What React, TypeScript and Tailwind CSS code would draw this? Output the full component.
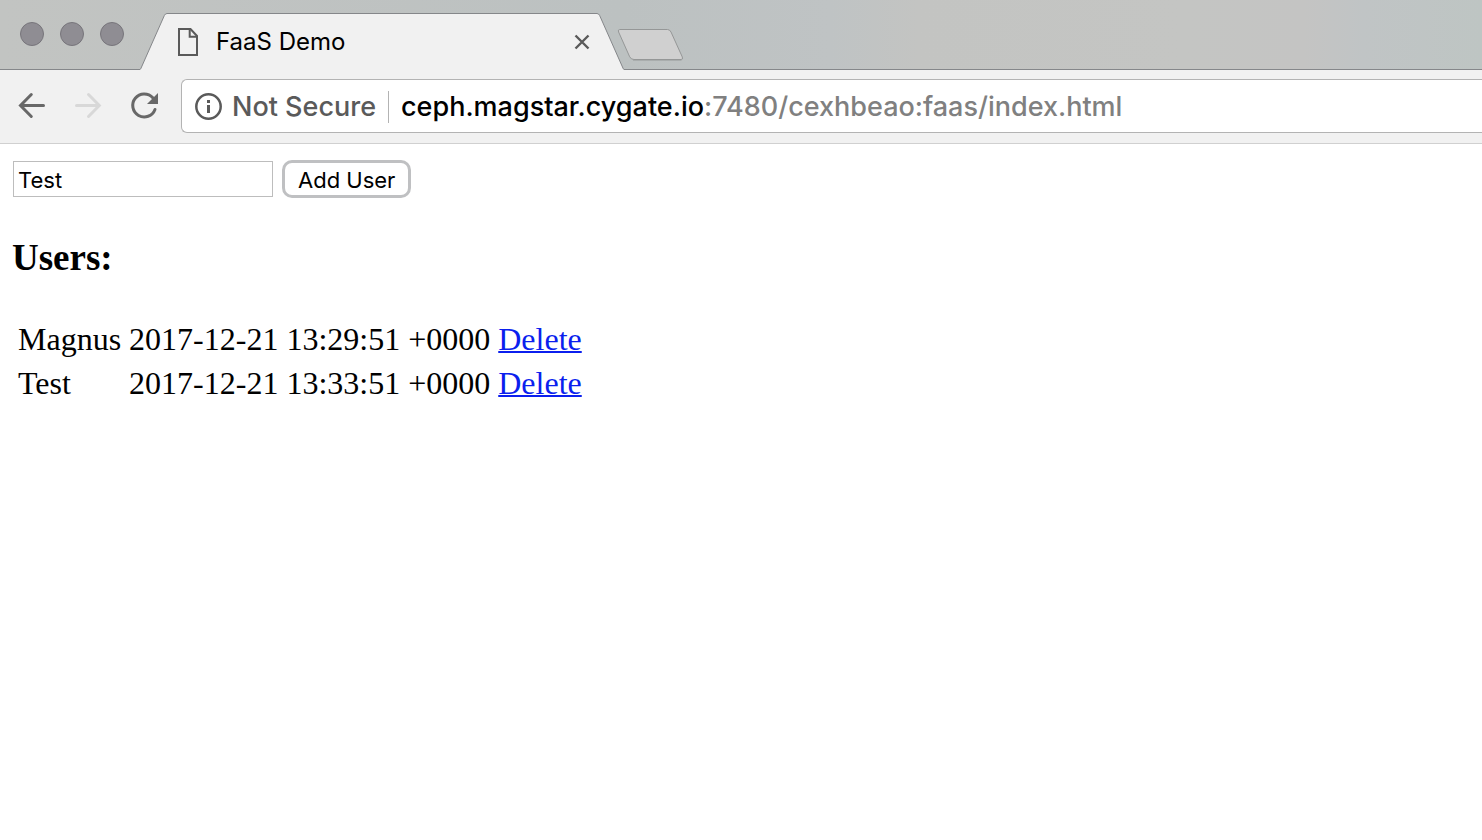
import { useState } from "react";

type User = { name: string; created: string };

const initialUsers: User[] = [
  { name: "Magnus", created: "2017-12-21 13:29:51 +0000" },
  { name: "Test", created: "2017-12-21 13:33:51 +0000" },
];

function WindowButton({ label }: { label: string }) {
  return (
    <button
      aria-label={label}
      className="size-6 rounded-full border border-[#77757b] bg-[#8f8d93]"
    />
  );
}

function TabStrip() {
  return (
    <div className="flex h-[70px] items-end bg-[linear-gradient(90deg,#c2c4c2_0%,#bcc1c1_42%,#bfc3c4_56%,#c3c4c2_62%,#c4c5c3_80%,#c4c4c3_88%,#c0c4c5_92%,#bec5c3_100%)]">
      <div className="flex h-full w-[140px] shrink-0 items-start gap-4 border-b border-[#85878a] pt-[22px] pl-5">
        <WindowButton label="Close window" />
        <WindowButton label="Minimize window" />
        <WindowButton label="Zoom window" />
      </div>
      <svg width="27" height="57" viewBox="0 0 27 57" className="shrink-0" aria-hidden="true">
        <path d="M0 57V56.5Q.6 56.3 1 55.2L24.3 2.6Q25.3.5 27 .5V57Z" fill="#f1f1f1" />
        <path d="M0 56.5Q.6 56.3 1 55.2L24.3 2.6Q25.3.5 27 .5" fill="none" stroke="#85878a" />
      </svg>
      <div className="flex h-[57px] w-[430px] shrink-0 items-center border-t border-[#85878a] bg-[#f1f1f1] pr-[3px] pl-[11px]">
        <svg width="20" height="28" viewBox="0 0 20 28" fill="none" stroke="#5a5a5a" strokeWidth="2" className="shrink-0" aria-hidden="true">
          <path d="M1 1H12.5L19 8V27H1Z" />
          <path d="M11.7 1V8.7H19" />
        </svg>
        <span className="grow pl-[18px] font-['Inter',sans-serif] text-[24px] leading-7 text-black">FaaS Demo</span>
        <button aria-label="Close tab" className="p-1">
          <svg width="16" height="16" viewBox="0 0 16 16" fill="none" stroke="#5a5a5a" strokeWidth="2.4">
            <path d="M1.5 1.5 14.5 14.5M14.5 1.5 1.5 14.5" />
          </svg>
        </button>
      </div>
      <svg width="27" height="57" viewBox="0 0 27 57" className="shrink-0" aria-hidden="true">
        <path d="M27 57V56.5Q26.4 56.3 26 55.2L2.7 2.6Q1.7.5 0 .5V57Z" fill="#f1f1f1" />
        <path d="M27 56.5Q26.4 56.3 26 55.2L2.7 2.6Q1.7.5 0 .5" fill="none" stroke="#85878a" />
      </svg>
      <div className="flex h-full grow items-start border-b border-[#85878a] pt-7">
        <button aria-label="New tab" className="-ml-2">
          <svg width="68" height="34" viewBox="0 0 68 34" className="block">
            <path
              d="M3.800 1.500H51.500Q53.700 1.500 55 4L66.300 29Q67.500 31.500 65 31.500H18Q15 31.500 13.700 28.800L2.600 4Q1.600 1.500 3.800 1.500Z"
              fill="#d0d0d0"
              stroke="#959797"
            />
            <path d="M17 32.500H65.500" stroke="#a9adad" />
          </svg>
        </button>
      </div>
    </div>
  );
}

function Toolbar() {
  return (
    <div className="flex h-[74px] items-center border-b border-[#d0d0d0] bg-[#f1f1f1] pb-[2px] pl-[18px]">
      <button aria-label="Back" className="mr-7">
        <svg width="28" height="28" viewBox="0 0 28 28" fill="none" stroke="#686868" strokeWidth="3" strokeLinecap="round" className="block">
          <path d="M25.500 13.500H3M13.300 2.500 2.500 13.500 13.300 24.500" />
        </svg>
      </button>
      <button aria-label="Forward" disabled className="mr-7">
        <svg width="28" height="28" viewBox="0 0 28 28" fill="none" stroke="#d8d8d8" strokeWidth="3" strokeLinecap="round" className="block">
          <path d="M2.500 13.500H25M14.500 2.500 25.300 13.500 14.500 24.500" />
        </svg>
      </button>
      <button aria-label="Reload" className="mr-[22px]">
        <svg width="29" height="28" viewBox="0 0 29 28" className="block">
          <path d="M22.800 5.800A11.500 11.500 0 1 0 25 17.500" fill="none" stroke="#686868" strokeWidth="3" strokeLinecap="round" />
          <path d="M28 1V12H17Z" fill="#686868" />
        </svg>
      </button>
      <div className="flex h-[54px] min-w-0 grow items-center rounded-l-md border border-r-0 border-[#b3b3b3] bg-white pt-[2px] pl-[13px] font-['Inter',sans-serif] text-[27px] leading-8 font-medium">
        <button className="flex shrink-0 items-center gap-[10px] text-[#5a5a5a]">
          <svg width="27" height="27" viewBox="0 0 27 27" fill="none" stroke="#5a5a5a" aria-hidden="true">
            <circle cx="13.500" cy="13.500" r="12.200" strokeWidth="2.500" />
            <path d="M13.500 12V20M13.500 7V10" strokeWidth="3" />
          </svg>
          Not Secure
        </button>
        <span className="mx-3 h-8 w-px shrink-0 bg-[#b3b3b3]" />
        <div
          role="textbox"
          aria-label="Address"
          contentEditable
          suppressContentEditableWarning
          spellCheck={false}
          className="min-w-0 grow overflow-hidden whitespace-nowrap text-[#808080] outline-none"
        >
          <span className="text-black">ceph.magstar.cygate.io</span>:7480/cexhbeao:faas/index.html
        </div>
      </div>
    </div>
  );
}

export default function App() {
  const [name, setName] = useState("Test");
  const [users, setUsers] = useState(initialUsers);

  return (
    <div className="min-h-screen bg-white text-black">
      <header>
        <TabStrip />
        <Toolbar />
      </header>
      <main className="px-3 pt-4 font-['Liberation_Serif',serif] text-[32px] leading-9">
        <form
          className="flex items-center gap-[9px] font-['Inter',sans-serif] text-[22px] leading-7"
          onSubmit={(event) => {
            event.preventDefault();
            setUsers([...users, { name, created: "2017-12-21 13:33:51 +0000" }]);
          }}
        >
          <input
            type="text"
            aria-label="User name"
            value={name}
            onChange={(event) => setName(event.target.value)}
            className="ml-px h-9 w-[260px] border border-[#bdbdbd] bg-white px-1 pt-[2px] outline-none"
          />
          <button
            type="submit"
            className="h-[38px] rounded-[10px] border-3 border-[#bfc0c2] bg-white px-[13px] pt-[2px]"
          >
            Add User
          </button>
        </form>
        <h3 className="mt-[38px] text-[37px] leading-[44px] font-bold">Users:</h3>
        <table className="mt-[35px] border-separate border-spacing-1">
          <tbody>
            {users.map((user, index) => (
              <tr key={index}>
                <td className="p-[2px]">{user.name}</td>
                <td className="p-[2px]">{user.created}</td>
                <td className="p-[2px]">
                  <a
                    href="#delete"
                    className="text-[#0b1fee] underline decoration-2"
                    onClick={(event) => {
                      event.preventDefault();
                      setUsers(users.filter((_, i) => i !== index));
                    }}
                  >
                    Delete
                  </a>
                </td>
              </tr>
            ))}
          </tbody>
        </table>
      </main>
    </div>
  );
}
